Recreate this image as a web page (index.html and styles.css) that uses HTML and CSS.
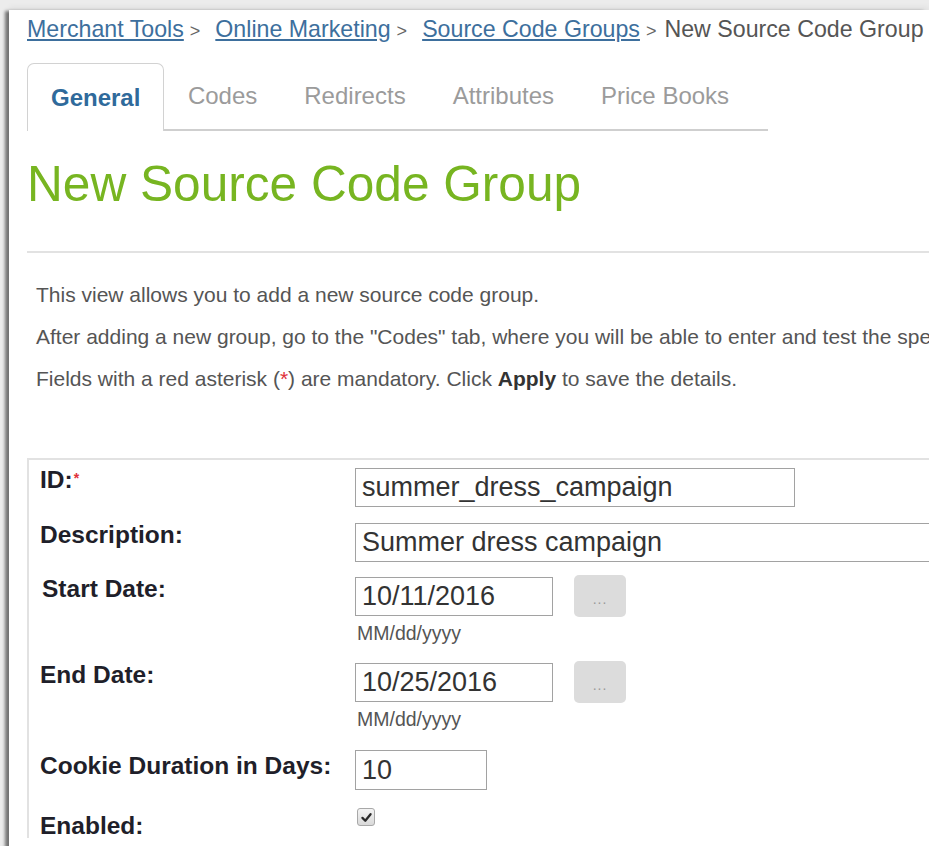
FILE: index.html
```html
<!DOCTYPE html>
<html lang="en">
<head>
<meta charset="utf-8">
<title>New Source Code Group</title>
<link rel="stylesheet" href="styles.css">
</head>
<body>
<div class="page">
  <nav class="crumbs">
    <a href="#">Merchant Tools</a><span class="sep">&gt;</span><a href="#">Online Marketing</a><span class="sep">&gt;</span><a href="#">Source Code Groups</a><span class="sep last">&gt;</span><span class="current">New Source Code Group</span>
  </nav>

  <ul class="tabs">
    <li class="tab active">General</li>
    <li class="tab">Codes</li>
    <li class="tab">Redirects</li>
    <li class="tab">Attributes</li>
    <li class="tab">Price Books</li>
  </ul>

  <h1 class="title">New Source Code Group</h1>
  <hr class="rule">

  <div class="intro">
    <p>This view allows you to add a new source code group.</p>
    <p>After adding a new group, go to the "Codes" tab, where you will be able to enter and test the specific codes for the group.</p>
    <p>Fields with a red asterisk (<span class="req">*</span>) are mandatory. Click <b>Apply</b> to save the details.</p>
  </div>

  <form class="form-box">
    <div class="row row-id">
      <label class="label">ID:<sup class="req">*</sup></label>
      <div class="field"><input class="input w-id" type="text" value="summer_dress_campaign"></div>
    </div>
    <div class="row row-desc">
      <label class="label">Description:</label>
      <div class="field"><input class="input w-desc" type="text" value="Summer dress campaign"></div>
    </div>
    <div class="row row-start">
      <label class="label indent">Start Date:</label>
      <div class="field">
        <div class="date-line">
          <input class="input w-date" type="text" value="10/11/2016">
          <button type="button" class="pick">...</button>
        </div>
        <div class="hint">MM/dd/yyyy</div>
      </div>
    </div>
    <div class="row row-end">
      <label class="label">End Date:</label>
      <div class="field">
        <div class="date-line">
          <input class="input w-date" type="text" value="10/25/2016">
          <button type="button" class="pick">...</button>
        </div>
        <div class="hint">MM/dd/yyyy</div>
      </div>
    </div>
    <div class="row row-cookie">
      <label class="label lower">Cookie Duration in Days:</label>
      <div class="field"><input class="input w-num" type="text" value="10"></div>
    </div>
    <div class="row">
      <label class="label lowest">Enabled:</label>
      <div class="field">
        <span class="check">
          <svg viewBox="0 0 16 16" width="13" height="13"><path d="M3 8.5 L6.5 12 L13 4" fill="none" stroke="#2a2a2a" stroke-width="2.8" stroke-linecap="round" stroke-linejoin="round"/></svg>
        </span>
      </div>
    </div>
  </form>
</div>
</body>
</html>
```

FILE: styles.css
```css
html, body {
  margin: 0;
  padding: 0;
  background: #ececec;
  overflow: hidden;
}

body {
  font-family: "Liberation Sans", Arial, sans-serif;
  color: #333;
}

.page {
  margin: 10px 0 0 9px;
  padding: 5px 0 0 18px;
  min-height: 900px;
  background: #fff;
  box-shadow: -5px 0 3px -1px rgba(0, 0, 0, 0.5), 0 -3px 6px rgba(0, 0, 0, 0.05);
}

/* breadcrumb trail */
.crumbs {
  font-size: 23.2px;
  line-height: 28px;
  white-space: nowrap;
}

.crumbs a {
  color: #3d6f9d;
  text-decoration: underline;
  text-underline-offset: 2px;
}

.crumbs .sep {
  font-size: 18px;
  color: #666;
  margin: 0 15px 0 6px;
}

.crumbs .sep.last {
  margin-right: 8px;
}

.crumbs .current {
  color: #555;
}

/* tab strip */
.tabs {
  display: flex;
  list-style: none;
  margin: 18px 0 0;
  padding: 0;
  width: 741px;
  height: 66px;
  border-bottom: 2px solid #cfcfcf;
}

.tab {
  display: flex;
  align-items: center;
  height: 66px;
  padding: 0 23.5px;
  font-size: 24px;
  color: #9b9b9b;
}

.tab.active {
  box-sizing: border-box;
  height: 68px;
  margin-bottom: -2px;
  padding: 0 23px;
  border: 1px solid #d2d2d2;
  border-bottom: none;
  border-radius: 7px 7px 0 0;
  background: #fff;
  font-weight: bold;
  color: #2f6a9b;
}

/* page heading */
.title {
  margin: 25px 0 0;
  font-size: 49.6px;
  line-height: 56px;
  font-weight: normal;
  color: #77b521;
}

.rule {
  margin: 39px 0 0;
  height: 2px;
  border: 0;
  background: #e2e2e2;
}

/* help text */
.intro {
  padding: 21px 0 0 9px;
  font-size: 21px;
  line-height: 42px;
  color: #555;
  white-space: nowrap;
}

.intro p {
  margin: 0;
}

.intro b {
  color: #333;
}

.req {
  color: #e0303a;
}

/* form panel */
.form-box {
  margin-top: 58px;
  padding: 8px 0 0 11px;
  border-top: 2px solid #e2e2e2;
  border-left: 2px solid #e2e2e2;
}

.row {
  display: flex;
  align-items: flex-start;
}

.row-id { margin-bottom: 16px; }
.row-desc { margin-bottom: 13px; }
.row-start { margin-bottom: 16px; }
.row-end { margin-bottom: 19px; }
.row-cookie { margin-bottom: 18px; }

.label {
  flex: 0 0 315px;
  font-size: 24.5px;
  line-height: 24px;
  font-weight: bold;
  color: #1f1f2a;
  white-space: nowrap;
}

.row-start .label,
.row-end .label {
  padding-top: 2px;
}

.label.indent {
  padding-left: 2px;
  box-sizing: border-box;
}

.label.lower {
  padding-top: 4px;
}

.label.lowest {
  padding-top: 6px;
}

.label sup {
  font-size: 14px;
  vertical-align: top;
  position: relative;
  top: -2px;
  margin-left: 1px;
}

.field {
  white-space: nowrap;
}

.input {
  box-sizing: border-box;
  height: 39px;
  margin: 0;
  padding: 0 6px;
  border: 1px solid #a2a2a2;
  border-radius: 0;
  font-family: "Liberation Sans", Arial, sans-serif;
  font-size: 27px;
  color: #333;
  background: #fff;
  outline: none;
}

.w-id { width: 440px; }
.w-desc { width: 640px; }
.w-date { width: 198px; }
.w-num { width: 132px; height: 40px; }

.date-line {
  display: flex;
  align-items: center;
  gap: 21px;
}

.pick {
  width: 52px;
  height: 42px;
  margin: 0;
  padding: 6px 0 0;
  border: 0;
  border-radius: 5px;
  background: #dcdcdc;
  color: #999;
  font-family: "Liberation Sans", Arial, sans-serif;
  font-size: 14px;
  letter-spacing: 1px;
}

.hint {
  margin-top: 4px;
  padding-left: 2px;
  font-size: 19.5px;
  line-height: 24px;
  color: #555;
}

.check {
  display: flex;
  align-items: center;
  justify-content: center;
  box-sizing: border-box;
  width: 18px;
  height: 18px;
  margin-left: 2px;
  border: 1px solid #a8a8a8;
  border-radius: 3px;
  background: linear-gradient(#f4f4f4, #d9d9d9);
}
```
